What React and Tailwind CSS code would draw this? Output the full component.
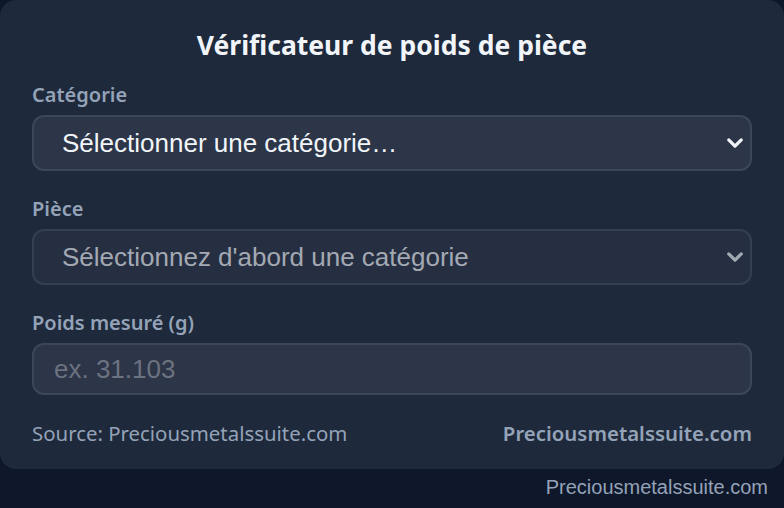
import React, { useState } from 'react';

const Chevron = ({ className }) => (
    <svg viewBox="0 0 16 16" className={className} fill="none" stroke="currentColor" strokeWidth="2.6" strokeLinecap="round" strokeLinejoin="round">
        <path d="M3 5.5l5 5 5-5" />
    </svg>
);

const labelClass = "block mb-[6px] text-[20px] leading-[28px] font-semibold text-[#94a3b8] font-['Noto_Sans',sans-serif]";

const App = () => {
    const [category, setCategory] = useState('');
    const [weight, setWeight] = useState('');

    return (
        <div className="min-h-[508px] bg-[#0f172a] flex flex-col">
            <div className="bg-[#1e293b] rounded-2xl px-8 pt-[27px] pb-[22px]">
                <h1 className="text-center text-[26.5px] leading-[36px] font-bold text-[#f1f5f9] font-['Noto_Sans',sans-serif] mb-[18px]">
                    Vérificateur de poids de pièce
                </h1>

                <label className={labelClass}>Catégorie</label>
                <div className="relative mb-[24px]">
                    <select
                        value={category}
                        onChange={(e) => setCategory(e.target.value)}
                        className="appearance-none w-full h-[56px] rounded-xl border-2 border-[#3b4659] bg-[#2d3548] pl-[28px] pr-12 text-[26px] text-[#f1f5f9] font-['Liberation_Sans',Arial,sans-serif] outline-none"
                    >
                        <option value="">Sélectionner une catégorie…</option>
                    </select>
                    <Chevron className="pointer-events-none absolute right-[7px] top-1/2 -translate-y-1/2 w-[20px] h-[20px] text-[#f1f5f9]" />
                </div>

                <label className={labelClass}>Pièce</label>
                <div className="relative mb-[24px]">
                    <select
                        disabled
                        className="appearance-none w-full h-[56px] rounded-xl border-2 border-[#343f52] bg-[#262f41] pl-[28px] pr-12 text-[26px] text-[#a3a9b3] font-['Liberation_Sans',Arial,sans-serif] outline-none"
                    >
                        <option>Sélectionnez d'abord une catégorie</option>
                    </select>
                    <Chevron className="pointer-events-none absolute right-[7px] top-1/2 -translate-y-1/2 w-[20px] h-[20px] text-[#a3a9b3]" />
                </div>

                <label className={labelClass}>Poids mesuré (g)</label>
                <input
                    type="text"
                    value={weight}
                    onChange={(e) => setWeight(e.target.value)}
                    placeholder="ex. 31.103"
                    className="w-full h-[52px] rounded-xl border-2 border-[#3b4659] bg-[#2d3548] px-[20px] text-[26px] text-[#f1f5f9] placeholder:text-[#6b7280] font-['Liberation_Sans',Arial,sans-serif] outline-none"
                />

                <div className="flex justify-between items-center mt-[24px] text-[20.4px] leading-[28px] text-[#94a3b8] font-['Noto_Sans',sans-serif]">
                    <span>Source: Preciousmetalssuite.com</span>
                    <span className="font-semibold">Preciousmetalssuite.com</span>
                </div>
            </div>

            <div className="text-right pr-4 pt-[4px] text-[20px] leading-[28px] text-[#94a3b8] font-['Liberation_Sans',Arial,sans-serif]">
                Preciousmetalssuite.com
            </div>
        </div>
    );
};

export default App;
